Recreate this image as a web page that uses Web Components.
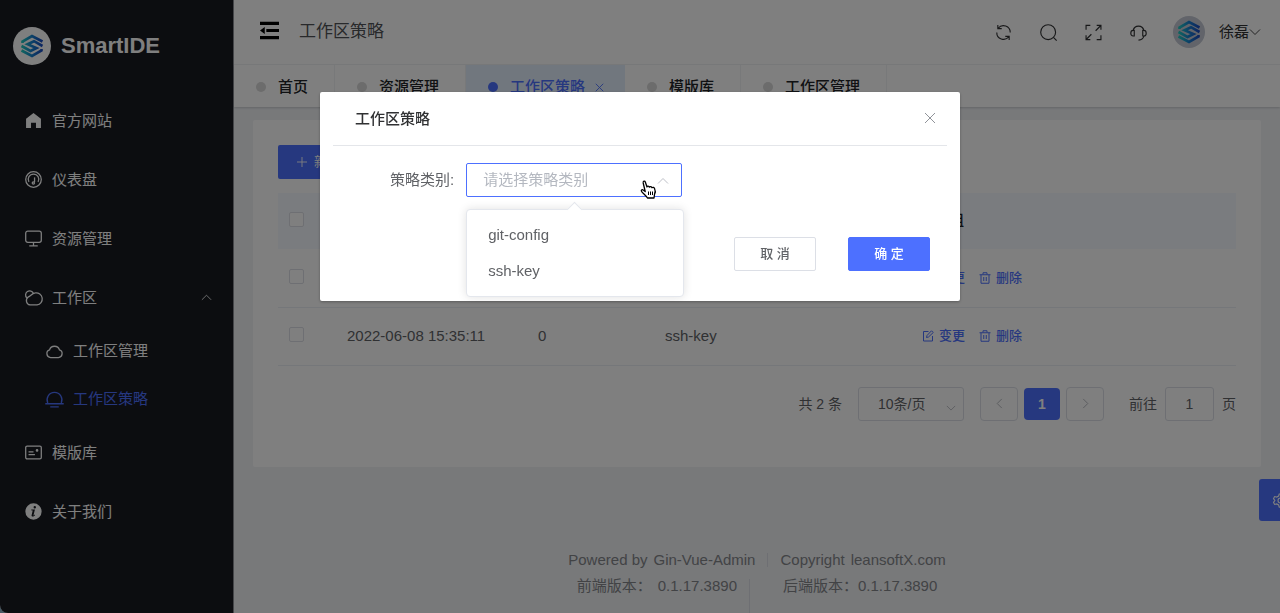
<!DOCTYPE html>
<html lang="zh-CN">
<head>
<meta charset="utf-8">
<meta name="viewport" content="width=device-width, initial-scale=1">
<title>SmartIDE - 工作区策略</title>
<style>
  html { height: 100%; background: #8fb3c9; }
  body {
    margin: 0;
    font: 15px/26px "Liberation Sans", "Noto Sans CJK SC", sans-serif;
    color: #606266;
    --primary: #4d70ff;
    --line: #ebeef5;
    --border: #dcdfe6;
    --ink: #303133;
    --muted: #909399;
  }
</style>
</head>
<body>
<app-shell>
  <side-menu slot="side">
    <menu-item icon="home">官方网站</menu-item>
    <menu-item icon="gauge">仪表盘</menu-item>
    <menu-item icon="monitor">资源管理</menu-item>
    <menu-item icon="cloudy" expanded>工作区</menu-item>
    <menu-item icon="cloud" sub>工作区管理</menu-item>
    <menu-item icon="sunset" sub active>工作区策略</menu-item>
    <menu-item icon="postcard">模版库</menu-item>
    <menu-item icon="info">关于我们</menu-item>
  </side-menu>
  <top-bar user="徐磊">工作区策略</top-bar>
  <tab-strip>
    <tab-item>首页</tab-item>
    <tab-item>资源管理</tab-item>
    <tab-item active>工作区策略</tab-item>
    <tab-item>模版库</tab-item>
    <tab-item>工作区管理</tab-item>
  </tab-strip>
  <content-card>
    <policy-table></policy-table>
    <page-pager></page-pager>
  </content-card>
  <app-footer></app-footer>
</app-shell>
<setting-tab></setting-tab>
<modal-dialog heading="工作区策略">
  <policy-select label="策略类别:"></policy-select>
  <ui-button slot="actions">取 消</ui-button>
  <ui-button slot="actions" primary>确 定</ui-button>
</modal-dialog>

<script>
const icons = {
  home: '<path fill="currentColor" stroke="none" d="M12 1.500 22.500 9.500V22.500H15.500V15H8.500V22.500H1.500V9.500Z"/>',
  gauge: '<circle cx="12" cy="12" r="11"/><path d="M5.500 15.500A7.500 7.500 0 1 1 18.500 15.500"/><path d="M13.500 9V15.500"/><circle cx="11.800" cy="17" r="1.600"/>',
  monitor: '<rect x="1" y="1.500" width="22" height="16" rx="3"/><path d="M12 17.500V22M6 22.500H18"/>',
  cloudy: '<path d="M7 22.500A6.300 6.300 0 0 1 4.500 11.300C8 11 9 6 14.500 5.500A8.500 8.500 0 0 1 17 22.500Z"/><path d="M2.500 12.500A5.800 5.800 0 1 1 12 6.200"/>',
  cloud: '<path d="M6.500 20.500A5.500 5.500 0 0 1 5 9.800A7.300 7.300 0 0 1 19 9.800A5.500 5.500 0 0 1 17.500 20.500Z"/>',
  sunset: '<path d="M2.500 17A10.500 10.500 0 1 1 21.500 17M-1 18H25M6 22.500H18"/>',
  postcard: '<rect x="1" y="3" width="22" height="18" rx="2"/><path d="M5 11H12M5 15H14"/><circle cx="17" cy="9" r="1" fill="currentColor"/>',
  info: '<path fill="currentColor" stroke="none" fill-rule="evenodd" d="M12 0.500A11.500 11.500 0 1 1 12 23.500A11.500 11.500 0 0 1 12 0.500ZM13.800 4.300A1.700 1.700 0 1 0 13.800 7.700A1.700 1.700 0 0 0 13.800 4.300ZM8.500 10.200 9 9.300 14 9 12 17.200C11.900 17.900 12.700 17.400 13.800 16.200L14.400 16.900C12.500 19.300 9 20.200 9.300 17.300L10.900 10.500Z"/>',
  up: '<path d="M2 17 12 7 22 17"/>',
  down: '<path d="M2 7 12 17 22 7"/>',
  left: '<path d="M17 2 7 12 17 22"/>',
  right: '<path d="M7 2 17 12 7 22"/>',
  close: '<path d="M2 2 22 22M22 2 2 22"/>',
  plus: '<path d="M12 2V22M2 12H22"/>',
  fold: '<path fill="currentColor" stroke="none" d="M0 1H24V5H0ZM8 10H24V14H8ZM0 19H24V23H0ZM6 7.500V16.500L0 12Z"/>',
  refresh: '<path d="M2.500 12A9.500 9.500 0 0 0 19.500 18M21.500 12A9.500 9.500 0 0 0 4.500 6M4 1.500V6.500H9.500M20 22.500V17.500H14.500"/>',
  search: '<circle cx="11.500" cy="11.500" r="10.500"/><path d="M19 19 23.500 23.500"/>',
  full: '<path d="M1.500 8V2H7.500M16.500 2H22.500V8M22 2.500 15 9.500M22.500 16V22H16.500M7.500 22H1.500V16M2 21.500 9 14.500"/>',
  headset: '<path d="M4.500 9A7.700 7.700 0 0 1 19.500 9M19.500 17C19 20.500 16 22.500 12 22.800"/><path d="M6 9V17H4.500C0 17 0 9 4.500 9ZM18 9V17H19.500C24 17 24 9 19.500 9Z"/>',
  edit: '<path d="M13 3H3V22H21V12M9 15 10 11 19 1.500 22.500 5 13 14Z"/>',
  trash: '<path d="M1 5.500H23M8 5V1.500H16V5M4 5.500V22.500H20V5.500M9.500 10V18M14.500 10V18"/>',
  gear: '<circle cx="12" cy="12" r="4"/><path d="M10 1.500H14L15 4.800 18 6.500 21.500 5.700 23.200 9 21 12 23.200 15 21.500 18.300 18 17.500 15 19.200 14 22.500H10L9 19.200 6 17.500 2.500 18.300 0.800 15 3 12 0.800 9 2.500 5.700 6 6.500 9 4.800Z"/>'
};

function define(name, css, markup) {
  customElements.define(name, class extends HTMLElement {
    constructor() {
      super();
      const root = this.attachShadow({ mode: 'open' });
      const base = '*{box-sizing:border-box} a,button,select,input{font:inherit;color:inherit} a{text-decoration:none} button{border:0;background:none;padding:0;cursor:pointer}';
      root.innerHTML = `<style>${base}${css}</style>${typeof markup === 'function' ? markup(this) : markup}`;
    }
  });
}

define('app-icon', `
  :host { display: inline-flex; width: 17px; height: 17px; flex: none; }
  svg { width: 100%; height: 100%; overflow: visible; fill: none; stroke: currentColor; stroke-width: var(--stroke, 1.8); }
`, el => `<svg viewBox="0 0 24 24" aria-hidden="true">${icons[el.getAttribute('name')]}</svg>`);

define('smart-logo', `
  :host { display: flex; align-items: center; justify-content: center; flex: none; border-radius: 50%; width: 38px; height: 38px; background: #fff; }
  svg { width: 24px; height: 24px; fill: none; stroke-width: 2.6; }
`, `<svg viewBox="0 0 24 24" role="img" aria-label="SmartIDE">
  <defs><linearGradient id="g" gradientUnits="userSpaceOnUse" x1="2" y1="12" x2="22" y2="12">
    <stop offset="0" stop-color="#20c8c0"/><stop offset="0.500" stop-color="#1780d0"/><stop offset="1" stop-color="#1a4cc0"/>
  </linearGradient></defs>
  <g stroke="url(#g)">
    <path d="M22.500 7.500 12 2 2.500 7.500V9"/>
    <path d="M22.500 12 14 7.200 7.500 10.200 16.500 14 10.500 17 1.500 12"/>
    <path d="M1.500 16.500 12 22 21.500 16.500V15"/>
  </g></svg>`);

define('app-shell', `
  :host { display: grid; grid-template-columns: 234px minmax(0, 1fr); min-height: 100vh; background: #f0f2f5; border-bottom-left-radius: 8px; overflow: hidden; }
  main { display: flex; flex-direction: column; min-width: 0; }
`, `<slot name="side"></slot><main><slot></slot></main>`);

define('side-menu', `
  :host { display: block; background: #181a21; color: #fff; border-right: 1px solid #8a8c92; }
  header { display: flex; align-items: center; gap: 10px; height: 91px; padding: 1px 13px 0; font-size: 22px; font-weight: bold; }
`, `<header><smart-logo></smart-logo><span>SmartIDE</span></header><nav><slot></slot></nav>`);

define('menu-item', `
  :host { display: block; }
  a { display: flex; align-items: center; gap: 10px; height: 59px; padding: 0 21px 0 25px; }
  :host([sub]) a { height: 48px; padding-left: 46px; }
  :host([active]) { color: var(--primary); }
  .arrow { width: 11px; height: 11px; margin-left: auto; }
`, el => `<a href="#"><app-icon name="${el.getAttribute('icon')}"></app-icon><span><slot></slot></span>${
  el.hasAttribute('expanded') ? '<app-icon class="arrow" name="up"></app-icon>' : ''}</a>`);

define('top-bar', `
  :host { display: flex; align-items: center; height: 64px; padding: 0 19px 0 26px; background: #fff; border-bottom: 1px solid #f2f3f5; }
  h1 { margin: 0 auto 0 20px; font-size: 17px; font-weight: normal; color: #505256; }
  button { display: flex; align-items: center; color: #303133; }
  .fold { color: #000; padding-bottom: 4px; }
  .fold app-icon { width: 19px; height: 19px; }
  .tools { display: flex; align-items: center; gap: 28px; }
  .tools app-icon { --stroke: 1.6; }
  smart-logo { width: 32px; height: 32px; background: #c4c9d4; margin: 0 14px 0 26px; }
  .user app-icon { width: 12px; height: 12px; }
`, el => `
  <button class="fold" aria-label="收起菜单"><app-icon name="fold"></app-icon></button>
  <h1><slot></slot></h1>
  <div class="tools">
    <button aria-label="刷新"><app-icon name="refresh"></app-icon></button>
    <button aria-label="搜索"><app-icon name="search"></app-icon></button>
    <button aria-label="全屏"><app-icon name="full"></app-icon></button>
    <button aria-label="客服"><app-icon name="headset"></app-icon></button>
  </div>
  <smart-logo></smart-logo>
  <button class="user"><span>${el.getAttribute('user')}</span><app-icon name="down"></app-icon></button>`);

define('tab-strip', `
  :host { display: flex; height: 42px; background: #fff; box-shadow: 0 1px 2px rgba(0, 0, 0, .16); }
`, `<slot></slot>`);

define('tab-item', `
  :host { display: flex; }
  button { display: flex; align-items: center; height: 42px; padding: 2px 26px 0 22px; border-right: 1px solid #f0f2f5; color: #202226; font-weight: 500; }
  i { width: 10px; height: 10px; margin-right: 12px; border-radius: 50%; background: #d8d8d8; }
  app-icon { width: 9px; height: 9px; margin-left: 10px; --stroke: 2.4; }
  :host([active]) button { background: #e3effd; color: var(--primary); padding-right: 21px; border: 0; }
  :host([active]) i { background: var(--primary); }
`, el => `<button><i></i><slot></slot>${el.hasAttribute('active') ? '<app-icon name="close"></app-icon>' : ''}</button>`);

define('content-card', `
  :host { display: block; margin: 13px 19px 0; padding: 25px 25px 46px; background: #fff; border-radius: 2px; }
`, `<slot></slot>`);

define('policy-table', `
  :host { display: block; }
  .add { display: flex; align-items: center; gap: 6px; height: 34px; padding: 0 18px; border-radius: 2px; background: var(--primary); color: #fff; font-size: 13px; }
  .add app-icon { width: 12px; height: 12px; }
  table { width: 100%; margin-top: 14px; border-collapse: collapse; table-layout: fixed; }
  th { height: 56px; padding: 0 12px 3px; background: #f5f8ff; color: #202226; font-size: 14px; font-weight: 500; text-align: left; }
  td { height: 58px; padding: 0 12px; border-bottom: 1px solid var(--line); }
  tr > :first-child { padding: 0 11px 3px; }
  input { display: block; appearance: none; width: 15px; height: 15px; margin: 0; border: 1px solid var(--border); border-radius: 2px; background: #fff; }
  .ops { display: flex; gap: 14px; color: var(--primary); font-size: 13px; font-weight: 500; }
  .ops button { display: flex; align-items: center; gap: 5px; }
  .ops app-icon { width: 12px; height: 12px; --stroke: 2; }
`, () => {
  const ops = `<td><div class="ops"><button><app-icon name="edit"></app-icon>变更</button><button><app-icon name="trash"></app-icon>删除</button></div></td>`;
  return `
  <button class="add"><app-icon name="plus"></app-icon>新增</button>
  <table>
    <colgroup><col style="width:57px"><col style="width:191px"><col style="width:127px"><col style="width:257px"><col></colgroup>
    <thead><tr><th><input type="checkbox" aria-label="全选"></th><th></th><th></th><th></th><th>按钮组</th></tr></thead>
    <tbody>
      <tr><td><input type="checkbox" aria-label="选择第 1 行"></td><td></td><td></td><td></td>${ops}</tr>
      <tr><td><input type="checkbox" aria-label="选择第 2 行"></td><td>2022-06-08 15:35:11</td><td>0</td><td>ssh-key</td>${ops}</tr>
    </tbody>
  </table>`;
});

define('page-pager', `
  :host { display: flex; align-items: center; justify-content: flex-end; margin-top: 21px; font-size: 14px; }
  .size { position: relative; display: flex; margin: 0 16px; }
  select { appearance: none; width: 106px; height: 34px; padding: 0 19px; border: 1px solid var(--border); border-radius: 3px; background: #fff; }
  .size app-icon { position: absolute; right: 8px; bottom: 8px; width: 10px; height: 10px; color: #a8abb2; }
  nav { display: flex; align-items: center; gap: 6px; margin-right: 25px; }
  nav button { display: flex; align-items: center; justify-content: center; width: 38px; height: 34px; border: 1px solid var(--border); border-radius: 4px; color: #a8abb2; }
  nav app-icon { width: 11px; height: 11px; }
  nav .now { width: 36px; height: 32px; border: 0; background: var(--primary); color: #fff; font-weight: bold; }
  label { display: flex; align-items: center; gap: 8px; }
  input { width: 49px; height: 34px; border: 1px solid var(--border); border-radius: 3px; background: #fff; text-align: center; }
`, `
  <span>共 2 条</span>
  <div class="size"><select aria-label="每页条数"><option>10条/页</option></select><app-icon name="down"></app-icon></div>
  <nav aria-label="分页">
    <button aria-label="上一页"><app-icon name="left"></app-icon></button>
    <button class="now">1</button>
    <button aria-label="下一页"><app-icon name="right"></app-icon></button>
  </nav>
  <label>前往 <input type="text" value="1"> 页</label>`);

define('app-footer', `
  :host { display: flex; flex-direction: column; align-items: center; margin-top: auto; padding-top: 20px; color: #85878b; }
  div { display: flex; }
  .brand { gap: 12px; }
  .brand i { margin: 6px 0; border-left: 1px solid #dcdfe6; }
  .version { gap: 12px; height: 40px; }
  .version i { margin: 6px 21px 0 0; border-left: 1px solid #dcdfe6; }
  span { display: flex; gap: 6px; }
  .tight { gap: 0; }
`, `
  <div class="brand"><span>Powered by <a href="#">Gin-Vue-Admin</a></span><i></i><span>Copyright <a href="#">leansoftX.com</a></span></div>
  <div class="version"><span>前端版本： <span>0.1.17.3890</span></span><i></i><span class="tight">后端版本：<span>0.1.17.3890</span></span></div>`);

define('setting-tab', `
  :host { position: fixed; right: -21px; top: 479px; }
  button { display: flex; align-items: center; justify-content: center; width: 42px; height: 42px; border-radius: 3px; background: var(--primary); color: #fff; }
  app-icon { width: 15px; height: 15px; }
`, `<button aria-label="设置"><app-icon name="gear"></app-icon></button>`);

define('modal-dialog', `
  :host { position: fixed; inset: 0; z-index: 10; display: flex; align-items: flex-start; justify-content: center; padding-top: 15vh; background: rgba(0, 0, 0, .5); }
  section { width: 50%; background: #fff; border-radius: 2px; box-shadow: 0 1px 3px rgba(0, 0, 0, .3); }
  header { display: flex; align-items: center; justify-content: space-between; height: 54px; margin: 0 13px; padding: 0 11px 0 22px; border-bottom: 1px solid #e4e6ea; }
  h2 { margin: 0; padding-top: 2px; font-size: 15px; font-weight: 500; color: var(--ink); }
  header button { display: flex; color: var(--muted); }
  header app-icon { width: 12px; height: 12px; --stroke: 2; }
  .body { padding: 17px 0 0 70px; }
  footer { display: flex; justify-content: flex-end; gap: 32px; padding: 40px 30px 30px; }
`, el => `
  <section role="dialog" aria-modal="true" aria-labelledby="title">
    <header><h2 id="title">${el.getAttribute('heading')}</h2><button aria-label="关闭"><app-icon name="close"></app-icon></button></header>
    <div class="body"><slot></slot></div>
    <footer><slot name="actions"></slot></footer>
  </section>`);

define('ui-button', `
  :host { display: block; }
  button { width: 82px; height: 34px; border: 1px solid var(--border); border-radius: 2px; background: #fff; font-size: 13px; font-weight: 500; color: #606266; }
  :host([primary]) button { background: var(--primary); border-color: var(--primary); color: #fff; }
`, `<button><slot></slot></button>`);

define('policy-select', `
  :host { display: flex; align-items: center; gap: 12px; }
  .field { position: relative; display: flex; }
  select { appearance: none; width: 216px; height: 34px; padding: 0 16px; border: 1px solid var(--primary); border-radius: 2px; background: #fff; color: #b4b8c0; outline: 0; }
  .arrow { position: absolute; right: 13px; top: 12px; width: 12px; height: 12px; color: #b4b8c0; }
  .hand { position: absolute; left: 174px; top: 17px; width: 17px; height: 19px; }
  .list { position: absolute; top: 46px; left: 0; width: 218px; padding: 7px 0; border: 1px solid #e4e7ed; border-radius: 4px; background: #fff; box-shadow: 0 0 10px rgba(0, 0, 0, .12); }
  .list::before { content: ""; position: absolute; left: 50%; top: -6px; width: 10px; height: 10px; margin-left: -6px; border: 1px solid #e4e7ed; border-right: 0; border-bottom: 0; background: #fff; transform: rotate(45deg); }
  .list button { display: block; width: 100%; height: 36px; padding: 0 21px; text-align: left; }
`, el => `
  <label for="kind">${el.getAttribute('label')}</label>
  <div class="field">
    <select id="kind"><option>请选择策略类别</option></select>
    <app-icon class="arrow" name="up"></app-icon>
    <div class="list" role="listbox" aria-label="策略类别">
      <button role="option">git-config</button>
      <button role="option">ssh-key</button>
    </div>
    <svg class="hand" viewBox="0 0 17 19" aria-hidden="true"><path fill="#fff" stroke="#000" stroke-width="1.300" stroke-linejoin="round" d="M5.200 11.500 3.200 3C2.800 1 4.800 0.500 5.400 2.200L7 7C7.200 5.800 9 5.800 9.400 7.200C10 6.200 11.600 6.400 11.900 7.700C13 7 14.300 7.400 14.600 8.800C15.500 10.500 15.500 12.500 14.500 14.500L14 18H7.500C6 15.500 3 13.500 1.500 11.300C0.800 9.800 2.300 9.200 3.500 10.200Z"/><path stroke="#000" stroke-width="1" d="M8.500 11.500V15M10.500 11.500V15M12.500 11.500V15"/></svg>
  </div>`);
</script>
</body>
</html>
